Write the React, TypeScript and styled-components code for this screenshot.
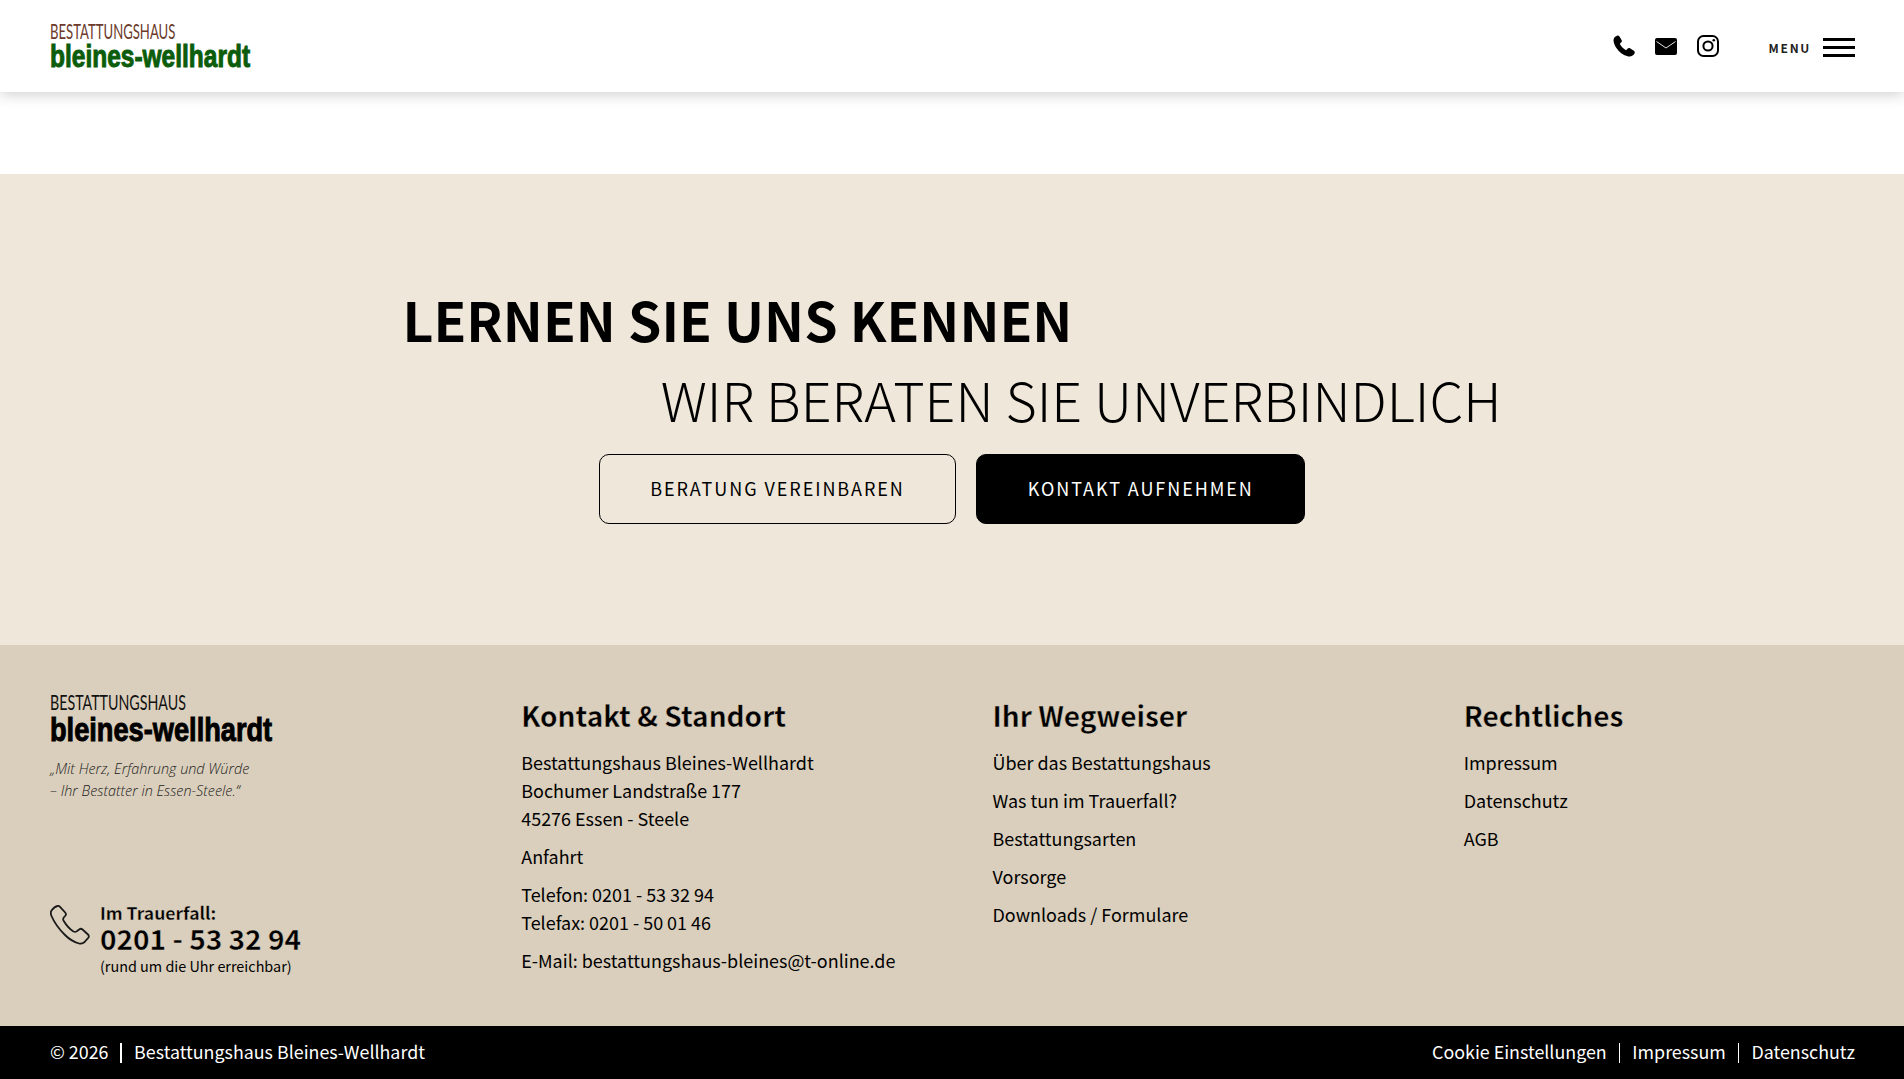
import { createGlobalStyle, styled } from "styled-components";

const SANS = `"Noto Sans CJK SC", "Noto Sans", sans-serif`;
const BEIGE = "#efe7da";
const SAND = "#dacfbc";

const GlobalStyle = createGlobalStyle`
  html, body {
    margin: 0;
    padding: 0;
    background: #fff;
    color: #000;
    font-family: ${SANS};
    font-size: 17.95px;
    line-height: 28px;
  }
  * { box-sizing: border-box; }
`;

const Header = styled.header`
  height: 92px;
  padding: 0 49px 0 50px;
  display: flex;
  align-items: center;
  justify-content: space-between;
  background: #fff;
  box-shadow: 0 2px 14px rgba(0, 0, 0, 0.2);
  position: relative;
`;

const Logo = styled.div<{ $footer?: boolean }>`
  display: flex;
  flex-direction: column;
  margin-top: ${(p) => (p.$footer ? -2.5 : 0)}px;
  color: ${(p) => (p.$footer ? "#000" : "#0b5c0b")};
`;

const LogoTop = styled.span<{ $footer?: boolean }>`
  font-family: "Lato", sans-serif;
  font-weight: 400;
  font-size: ${(p) => (p.$footer ? 22 : 21)}px;
  line-height: 20px;
  color: ${(p) => (p.$footer ? "#111" : "#6b3a2a")};
  transform: scaleX(${(p) => (p.$footer ? 0.647 : 0.625)});
  transform-origin: left center;
  white-space: nowrap;
`;

const LogoBottom = styled.span<{ $footer?: boolean }>`
  margin-top: 2px;
  font-family: "Liberation Sans", sans-serif;
  font-weight: 700;
  font-size: ${(p) => (p.$footer ? 34 : 31)}px;
  line-height: ${(p) => (p.$footer ? 30 : 28)}px;
  -webkit-text-stroke: 1px currentColor;
  transform: scaleX(${(p) => (p.$footer ? 0.8 : 0.79)});
  transform-origin: left center;
  white-space: nowrap;
`;

const HeaderRight = styled.div`
  display: flex;
  align-items: center;
`;

const IconRow = styled.div`
  display: flex;
  align-items: center;
  gap: 20px;
  margin-right: 50px;
`;

const MenuLabel = styled.span`
  margin: 3px 12px 0 0;
  font-size: 12px;
  font-weight: 700;
  letter-spacing: 1.7px;
  color: #222;
`;

const Burger = styled.div`
  width: 32px;
  height: 19px;
  margin-top: 3px;
  display: flex;
  flex-direction: column;
  justify-content: space-between;
`;

const BurgerBar = styled.span`
  height: 3.4px;
  background: #000;
`;

const Cta = styled.section`
  margin-top: 82px;
  height: 471px;
  background: ${BEIGE};
  padding-top: 109px;
  display: flex;
  flex-direction: column;
  align-items: center;
`;

const CtaText = styled.div`
  width: 1099px;
  display: flex;
  flex-direction: column;
`;

const CtaTitle = styled.h2`
  margin: 0;
  font-size: 53.5px;
  line-height: 72px;
  font-weight: 700;
`;

const CtaSubtitle = styled.h3`
  margin: 8px 0 0;
  font-size: 53.85px;
  line-height: 72px;
  font-weight: 300;
  text-align: right;
`;

const CtaButtons = styled.div`
  margin-top: 19px;
  display: flex;
  gap: 20px;
`;

const CtaButton = styled.a<{ $filled?: boolean }>`
  height: 70px;
  padding: 0 50.5px 2px;
  display: flex;
  align-items: center;
  border-radius: 10px;
  border: 1px solid #000;
  background: ${(p) => (p.$filled ? "#000" : "transparent")};
  color: ${(p) => (p.$filled ? "#fff" : "#000")};
  font-size: 18px;
  letter-spacing: 1.93px;
`;

const Footer = styled.footer`
  height: 381px;
  background: ${SAND};
  padding: 49px 49px 40px 50px;
  display: grid;
  grid-template-columns: repeat(4, 1fr);
  column-gap: 80px;
`;

const BrandColumn = styled.div`
  padding-bottom: 8.4px;
  display: flex;
  flex-direction: column;
  justify-content: space-between;
`;

const Quote = styled.p`
  margin: 14.5px 0 0;
  font-family: "Open Sans", sans-serif;
  font-style: italic;
  font-weight: 300;
  font-size: 14.4px;
  line-height: 22px;
  color: #222;
`;

const Emergency = styled.div`
  display: flex;
  gap: 10px;
`;

const EmergencyIcon = styled.svg`
  width: 40px;
  height: 40px;
  margin-top: 2px;
  flex: none;
  fill: none;
  stroke: #1a1a1a;
  stroke-width: 1.8;
`;

const EmergencyText = styled.div`
  display: flex;
  flex-direction: column;
`;

const EmergencyLabel = styled.span`
  font-size: 17.5px;
  line-height: 20px;
  font-weight: 700;
  -webkit-text-stroke: 0.3px ${SAND};
`;

const EmergencyNumber = styled.span`
  font-size: 28px;
  line-height: 31px;
  font-weight: 700;
  -webkit-text-stroke: 0.4px ${SAND};
`;

const EmergencyNote = styled.span`
  font-size: 14.4px;
  line-height: 24px;
`;

const ColumnTitle = styled.h4`
  margin: 1px 0 13px;
  font-size: 28px;
  line-height: 40px;
  font-weight: 700;
  -webkit-text-stroke: 0.4px ${SAND};
`;

const Para = styled.p`
  margin: 0 0 10px;
`;

const Bar = styled.div`
  height: 53px;
  padding: 0 49px 3px 50px;
  background: #000;
  color: #fff;
  display: flex;
  align-items: center;
  justify-content: space-between;
  font-size: 17.85px;
`;

const BarGroup = styled.div`
  display: flex;
  align-items: center;
`;

const Sep = styled.span`
  width: 1.6px;
  height: 20px;
  margin: 3px 12px 0;
  background: #fff;
`;

const PhoneIcon = () => (
  <svg width="22" height="22" viewBox="0 0 22 22" fill="#000">
    <path d="M4.5 .5C2.5 1.2.8 2.5.5 5c0 7 8.5 16.5 16.5 16.5 2.500-.2 4-2 4.700-3.500.3-1-.2-1.700-.9-2.200L17 13.300c-.8-.5-1.700-.4-2.300.3l-1.500 1.600C10.500 14 8 11.500 6.800 8.800l1.500-1.500c.7-.6.8-1.500.3-2.300L6.300 1.200C5.900.6 5.200.3 4.500.5z" />
  </svg>
);

const MailIcon = () => (
  <svg width="22" height="17" viewBox="0 0 22 17">
    <rect width="22" height="17" rx="2" fill="#000" />
    <path d="M1.5 3.500 11 10l9.500-6.500" fill="none" stroke="#fff" strokeWidth="0.9" />
  </svg>
);

const InstagramIcon = () => (
  <svg width="22" height="22" viewBox="0 0 22 22" fill="none" stroke="#000" strokeWidth="2">
    <rect x="1" y="1" width="20" height="20" rx="5.5" />
    <circle cx="11" cy="11" r="4.600" />
    <circle cx="16.800" cy="5.200" r="1.300" fill="#000" stroke="none" />
  </svg>
);

const BrandLogo = ({ footer }: { footer?: boolean }) => (
  <Logo $footer={footer}>
    <LogoTop $footer={footer}>BESTATTUNGSHAUS</LogoTop>
    <LogoBottom $footer={footer}>bleines-wellhardt</LogoBottom>
  </Logo>
);

const App = () => {
  return (
    <>
      <GlobalStyle />
      <Header>
        <BrandLogo />
        <HeaderRight>
          <IconRow>
            <PhoneIcon />
            <MailIcon />
            <InstagramIcon />
          </IconRow>
          <MenuLabel>MENU</MenuLabel>
          <Burger>
            <BurgerBar />
            <BurgerBar />
            <BurgerBar />
          </Burger>
        </HeaderRight>
      </Header>
      <Cta>
        <CtaText>
          <CtaTitle>LERNEN SIE UNS KENNEN</CtaTitle>
          <CtaSubtitle>WIR BERATEN SIE UNVERBINDLICH</CtaSubtitle>
        </CtaText>
        <CtaButtons>
          <CtaButton>BERATUNG VEREINBAREN</CtaButton>
          <CtaButton $filled>KONTAKT AUFNEHMEN</CtaButton>
        </CtaButtons>
      </Cta>
      <Footer>
        <BrandColumn>
          <div>
            <BrandLogo footer />
            <Quote>
              „Mit Herz, Erfahrung und Würde
              <br />– Ihr Bestatter in Essen-Steele.“
            </Quote>
          </div>
          <Emergency>
            <EmergencyIcon viewBox="0 0 40 40">
              <path d="M7.500 1C6 1.200 3 3.500 1.500 5.500.5 7 .7 9 1.500 11 4 17 9 24 15 30c4 4 9 7 14 8.500 2 .5 3.500 0 5-1l4.500-5c.5-1 .5-2-.5-3l-5.500-5c-1-.8-2-1-3-.2l-3 2.200c-1 .5-2 .5-3 0-4-2.500-8-7.500-10-11-.5-1-.5-2 .3-3l1.700-2c.8-1 .5-2-.3-3L10 1.800C9.300 1 8.500.8 7.500 1z" />
            </EmergencyIcon>
            <EmergencyText>
              <EmergencyLabel>Im Trauerfall:</EmergencyLabel>
              <EmergencyNumber>0201 - 53 32 94</EmergencyNumber>
              <EmergencyNote>(rund um die Uhr erreichbar)</EmergencyNote>
            </EmergencyText>
          </Emergency>
        </BrandColumn>
        <div>
          <ColumnTitle>Kontakt &amp; Standort</ColumnTitle>
          <Para>
            Bestattungshaus Bleines-Wellhardt
            <br />
            Bochumer Landstraße 177
            <br />
            45276 Essen - Steele
          </Para>
          <Para>Anfahrt</Para>
          <Para>
            Telefon: 0201 - 53 32 94
            <br />
            Telefax: 0201 - 50 01 46
          </Para>
          <Para>E-Mail: bestattungshaus-bleines@t-online.de</Para>
        </div>
        <div>
          <ColumnTitle>Ihr Wegweiser</ColumnTitle>
          <Para>Über das Bestattungshaus</Para>
          <Para>Was tun im Trauerfall?</Para>
          <Para>Bestattungsarten</Para>
          <Para>Vorsorge</Para>
          <Para>Downloads / Formulare</Para>
        </div>
        <div>
          <ColumnTitle>Rechtliches</ColumnTitle>
          <Para>Impressum</Para>
          <Para>Datenschutz</Para>
          <Para>AGB</Para>
        </div>
      </Footer>
      <Bar>
        <BarGroup>
          © 2026
          <Sep />
          Bestattungshaus Bleines-Wellhardt
        </BarGroup>
        <BarGroup>
          Cookie Einstellungen
          <Sep />
          Impressum
          <Sep />
          Datenschutz
        </BarGroup>
      </Bar>
    </>
  );
};

export default App;
